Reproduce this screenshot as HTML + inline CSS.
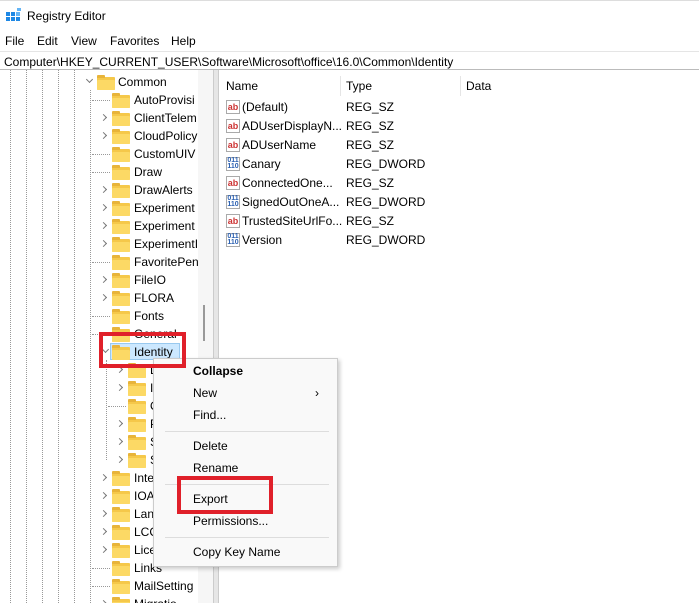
<!DOCTYPE html><html><head><style>
*{margin:0;padding:0;box-sizing:border-box}
html,body{width:699px;height:603px;overflow:hidden}
body{background:#fff;font-family:"Liberation Sans",sans-serif;font-size:12px;color:#000;position:relative}
.a{position:absolute;white-space:nowrap}
.f{position:absolute;width:18px;height:13px;background:#f5c84a;border-radius:1px}
.f:before{content:"";position:absolute;left:0;top:-2px;width:8px;height:3px;background:#e8b43a;border-radius:1px 1px 0 0}
.f:after{content:"";position:absolute;left:0;top:3px;width:18px;height:10px;background:#fcd965;border-radius:1px}
.ar{position:absolute;width:5px;height:5px;border-right:1px solid #777;border-top:1px solid #777;transform:rotate(45deg)}
.v{position:absolute;top:70px;height:533px;border-left:1px dotted #999}
.ic{position:absolute;width:14px;height:14px;border:1px solid #aaa;background:#fff;font-size:9px;font-weight:bold;line-height:12px;text-align:center}
.ab{color:#c33}.dw{color:#2a5fb0;font-size:7px;line-height:6px}
.m{position:absolute;left:193px}
.sep{position:absolute;left:165px;width:164px;height:1px;background:#ddd}
</style></head><body>
<div class="a" style="left:0;top:0;width:699px;height:32px;background:#fff;border-top:1px solid #ddd"></div>
<svg class="a" style="left:6px;top:8px" width="16" height="16"><g fill="#1e88e5"><rect x="0" y="4" width="4" height="4"/><rect x="5" y="4" width="4" height="4"/><rect x="0" y="9" width="4" height="4"/><rect x="5" y="9" width="4" height="4"/><rect x="10" y="9" width="4" height="4"/><rect x="10" y="4" width="4" height="4" fill="#64b5f6"/><rect x="11" y="0" width="4" height="3" fill="#64b5f6"/></g></svg>
<div class="a" style="left:27px;top:9px;font-size:12px">Registry Editor</div>
<div class="a" style="left:5px;top:34px">File</div><div class="a" style="left:37px;top:34px">Edit</div><div class="a" style="left:71px;top:34px">View</div><div class="a" style="left:110px;top:34px">Favorites</div><div class="a" style="left:171px;top:34px">Help</div>
<div class="a" style="left:0;top:51px;width:699px;height:19px;background:#fff;border-top:1px solid #e5e5e5;border-bottom:1px solid #bbb"></div>
<div class="a" style="left:4px;top:55px">Computer\HKEY_CURRENT_USER\Software\Microsoft\office\16.0\Common\Identity</div>
<div class="a" style="left:198px;top:70px;width:15px;height:533px;background:#f6f6f6"></div>
<div class="a" style="left:203px;top:305px;width:2px;height:36px;background:#999"></div>
<div class="a" style="left:213px;top:70px;width:6px;height:533px;background:#e6e6e6;border-left:1px solid #ccc;border-right:1px solid #ccc"></div>
<div class="v" style="left:10px"></div><div class="v" style="left:26px"></div><div class="v" style="left:42px"></div><div class="v" style="left:58px"></div><div class="v" style="left:74px"></div><div class="v" style="left:90px;top:90px;height:513px"></div>
<div class="v" style="left:106px;top:360px;height:100px"></div>
<div class="ar" style="left:87px;top:77px;transform:rotate(135deg)"></div>
<div class="f" style="left:97px;top:77px"></div><div class="a" style="left:118px;top:75px">Common</div>
<div id="tree"></div>
<script>
var L=[["AutoProvisi",0],["ClientTelem",1],["CloudPolicy",1],["CustomUIV",0],["Draw",0],["DrawAlerts",1],["Experiment",1],["Experiment",1],["ExperimentI",1],["FavoritePen",0],["FileIO",1],["FLORA",1],["Fonts",0],["General",0],["Identity",2],["L",1,1],["Ic",1,1],["O",0,1],["P",1,1],["S",1,1],["S",1,1],["Inte",1],["IOAV",1],["Lang",1],["LCC",1],["Lice",1],["Links",0],["MailSetting",0],["Migratio",1]];
var h="";L.forEach(function(e,i){var y=100+18*i;var o=e[2]?16:0;
if(e[1]==1)h+='<div class="ar" style="left:'+(101+o)+'px;top:'+(y-3)+'px"></div>';
if(e[1]==2)h+='<div class="ar" style="left:103px;top:'+(y-5)+'px;transform:rotate(135deg)"></div>';
if(e[1]==0)h+='<div class="a" style="left:'+(92+o)+'px;top:'+y+'px;width:18px;border-top:1px dotted #999"></div>';
if(e[1]==2)h+='<div class="a" style="left:110px;top:'+(y-9)+'px;width:70px;height:17px;background:#cce8ff;border:1px solid #99c9ef"></div>';
h+='<div class="f" style="left:'+(112+o)+'px;top:'+(y-5)+'px"></div><div class="a" style="left:'+(134+o)+'px;top:'+(y-7)+'px">'+e[0]+'</div>';});
document.getElementById("tree").innerHTML=h;
</script>
<div class="a" style="left:226px;top:79px">Name</div><div class="a" style="left:346px;top:79px">Type</div><div class="a" style="left:466px;top:79px">Data</div>
<div class="a" style="left:340px;top:76px;width:1px;height:20px;background:#e5e5e5"></div><div class="a" style="left:460px;top:76px;width:1px;height:20px;background:#e5e5e5"></div>
<div id="list"></div>
<script>
var R=[["(Default)","REG_SZ"],["ADUserDisplayN...","REG_SZ"],["ADUserName","REG_SZ"],["Canary","REG_DWORD"],["ConnectedOne...","REG_SZ"],["SignedOutOneA...","REG_DWORD"],["TrustedSiteUrlFo...","REG_SZ"],["Version","REG_DWORD"]];
var h="";R.forEach(function(e,i){var y=100+19*i;var d=e[1]=="REG_DWORD";
h+='<div class="ic '+(d?'dw':'ab')+'" style="left:226px;top:'+(y)+'px">'+(d?'011<br>110':'ab')+'</div><div class="a" style="left:242px;top:'+y+'px">'+e[0]+'</div><div class="a" style="left:346px;top:'+y+'px">'+e[1]+'</div>';});
document.getElementById("list").innerHTML=h;
</script>
<div class="a" style="left:153px;top:358px;width:185px;height:209px;background:#f9f9f9;border:1px solid #ccc;box-shadow:2px 2px 4px rgba(0,0,0,.2)"></div>
<div class="m a" style="top:364px;font-weight:bold">Collapse</div>
<div class="m a" style="top:386px">New</div><div class="a" style="left:315px;top:386px">&#8250;</div>
<div class="m a" style="top:408px">Find...</div>
<div class="sep" style="top:431px"></div>
<div class="m a" style="top:439px">Delete</div>
<div class="m a" style="top:461px">Rename</div>
<div class="sep" style="top:484px"></div>
<div class="m a" style="top:492px">Export</div>
<div class="m a" style="top:514px">Permissions...</div>
<div class="sep" style="top:537px"></div>
<div class="m a" style="top:545px">Copy Key Name</div>
<div class="a" style="left:99px;top:332px;width:87px;height:36px;border:4px solid #e0202a"></div>
<div class="a" style="left:177px;top:476px;width:96px;height:38px;border:4px solid #e0202a"></div>
</body></html>
